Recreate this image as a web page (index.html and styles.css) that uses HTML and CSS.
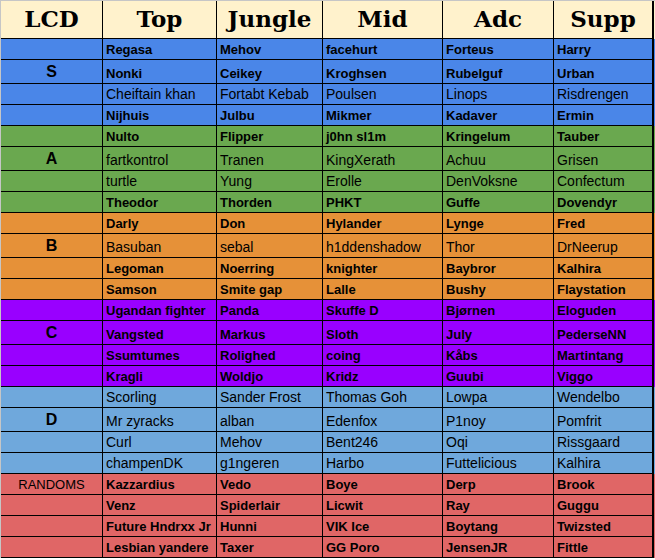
FILE: index.html
```html
<!DOCTYPE html>
<html>
<head>
<meta charset="utf-8">
<link rel="stylesheet" href="styles.css">
</head>
<body>
<div class="sheet">
  <div class="row head">
    <div class="c">LCD</div><div class="c">Top</div><div class="c">Jungle</div><div class="c">Mid</div><div class="c">Adc</div><div class="c">Supp</div>
  </div>

  <div class="tier t-s">
    <div class="row"><div class="c"></div><div class="c">Regasa</div><div class="c">Mehov</div><div class="c">facehurt</div><div class="c">Forteus</div><div class="c">Harry</div></div>
    <div class="row tall"><div class="c lbl">S</div><div class="c">Nonki</div><div class="c">Ceikey</div><div class="c">Kroghsen</div><div class="c">Rubelguf</div><div class="c">Urban</div></div>
    <div class="row n"><div class="c"></div><div class="c">Cheiftain khan</div><div class="c">Fortabt Kebab</div><div class="c">Poulsen</div><div class="c">Linops</div><div class="c">Risdrengen</div></div>
    <div class="row"><div class="c"></div><div class="c">Nijhuis</div><div class="c">Julbu</div><div class="c">Mikmer</div><div class="c">Kadaver</div><div class="c">Ermin</div></div>
  </div>

  <div class="tier t-a">
    <div class="row"><div class="c"></div><div class="c">Nulto</div><div class="c">Flipper</div><div class="c">j0hn sl1m</div><div class="c">Kringelum</div><div class="c">Tauber</div></div>
    <div class="row tall n"><div class="c lbl">A</div><div class="c">fartkontrol</div><div class="c">Tranen</div><div class="c">KingXerath</div><div class="c">Achuu</div><div class="c">Grisen</div></div>
    <div class="row n"><div class="c"></div><div class="c">turtle</div><div class="c">Yung</div><div class="c">Erolle</div><div class="c">DenVoksne</div><div class="c">Confectum</div></div>
    <div class="row"><div class="c"></div><div class="c">Theodor</div><div class="c">Thorden</div><div class="c">PHKT</div><div class="c">Guffe</div><div class="c">Dovendyr</div></div>
  </div>

  <div class="tier t-b">
    <div class="row"><div class="c"></div><div class="c">Darly</div><div class="c">Don</div><div class="c">Hylander</div><div class="c">Lynge</div><div class="c">Fred</div></div>
    <div class="row tall n"><div class="c lbl">B</div><div class="c">Basuban</div><div class="c">sebal</div><div class="c">h1ddenshadow</div><div class="c">Thor</div><div class="c">DrNeerup</div></div>
    <div class="row"><div class="c"></div><div class="c">Legoman</div><div class="c">Noerring</div><div class="c">knighter</div><div class="c">Baybror</div><div class="c">Kalhira</div></div>
    <div class="row"><div class="c"></div><div class="c">Samson</div><div class="c">Smite gap</div><div class="c">Lalle</div><div class="c">Bushy</div><div class="c">Flaystation</div></div>
  </div>

  <div class="tier t-c">
    <div class="row"><div class="c"></div><div class="c">Ugandan fighter</div><div class="c">Panda</div><div class="c">Skuffe D</div><div class="c">Bjørnen</div><div class="c">Eloguden</div></div>
    <div class="row tall"><div class="c lbl">C</div><div class="c">Vangsted</div><div class="c">Markus</div><div class="c">Sloth</div><div class="c">July</div><div class="c">PederseNN</div></div>
    <div class="row"><div class="c"></div><div class="c">Ssumtumes</div><div class="c">Rolighed</div><div class="c">coing</div><div class="c">Kåbs</div><div class="c">Martintang</div></div>
    <div class="row"><div class="c"></div><div class="c">Kragli</div><div class="c">Woldjo</div><div class="c">Kridz</div><div class="c">Guubi</div><div class="c">Viggo</div></div>
  </div>

  <div class="tier t-d">
    <div class="row n"><div class="c"></div><div class="c">Scorling</div><div class="c">Sander Frost</div><div class="c">Thomas Goh</div><div class="c">Lowpa</div><div class="c">Wendelbo</div></div>
    <div class="row tall n"><div class="c lbl">D</div><div class="c">Mr zyracks</div><div class="c">alban</div><div class="c">Edenfox</div><div class="c">P1noy</div><div class="c">Pomfrit</div></div>
    <div class="row n"><div class="c"></div><div class="c">Curl</div><div class="c">Mehov</div><div class="c">Bent246</div><div class="c">Oqi</div><div class="c">Rissgaard</div></div>
    <div class="row n"><div class="c"></div><div class="c">champenDK</div><div class="c">g1ngeren</div><div class="c">Harbo</div><div class="c">Futtelicious</div><div class="c">Kalhira</div></div>
  </div>

  <div class="tier t-r">
    <div class="row"><div class="c lbl rnd">RANDOMS</div><div class="c">Kazzardius</div><div class="c">Vedo</div><div class="c">Boye</div><div class="c">Derp</div><div class="c">Brook</div></div>
    <div class="row"><div class="c"></div><div class="c">Venz</div><div class="c">Spiderlair</div><div class="c">Licwit</div><div class="c">Ray</div><div class="c">Guggu</div></div>
    <div class="row"><div class="c"></div><div class="c">Future Hndrxx Jr</div><div class="c">Hunni</div><div class="c">VIK Ice</div><div class="c">Boytang</div><div class="c">Twizsted</div></div>
    <div class="row"><div class="c"></div><div class="c">Lesbian yandere</div><div class="c">Taxer</div><div class="c">GG Poro</div><div class="c">JensenJR</div><div class="c">Fittle</div></div>
  </div>
</div>
</body>
</html>
```

FILE: styles.css
```css
html, body {
  margin: 0;
  padding: 0;
  background: #ffffff;
}

.sheet {
  width: 654px;
  border-left: 1px solid #c6c6c6;
  border-top: 1px solid #c6c6c6;
  font-family: "Liberation Sans", Arial, sans-serif;
  color: #000;
}

.row {
  display: grid;
  grid-template-columns: 102px 114px 106px 120px 111px 100px;
  height: 21px;
}

.row.tall {
  height: 24px;
}

.c {
  box-sizing: border-box;
  border-right: 1px solid #000;
  border-bottom: 1px solid #000;
  padding: 0 3px 2px 3px;
  display: flex;
  align-items: flex-end;
  white-space: nowrap;
  overflow: hidden;
  font-size: 13px;
  font-weight: bold;
  line-height: 15px;
}

.c:last-child {
  border-right-width: 2px;
}

.row.n .c {
  font-weight: normal;
  font-size: 14px;
}

.row .c.lbl {
  justify-content: center;
  align-items: center;
  padding: 0;
  font-size: 16px;
  font-weight: bold;
}

.row .c.rnd {
  font-size: 13px;
  font-weight: normal;
}

.head {
  height: 38px;
  background: #fff2cc;
}

.head .c {
  justify-content: center;
  align-items: center;
  padding: 0 0 2px 0;
  font-family: "DejaVu Serif", "Liberation Serif", serif;
  font-size: 23px;
  font-weight: bold;
  line-height: 28px;
}

.t-s { background: #4a86e8; }
.t-a { background: #6aa84f; }
.t-b { background: #e69138; }
.t-c { background: #9900ff; }
.t-d { background: #6fa8dc; }
.t-r { background: #e06666; }
```
